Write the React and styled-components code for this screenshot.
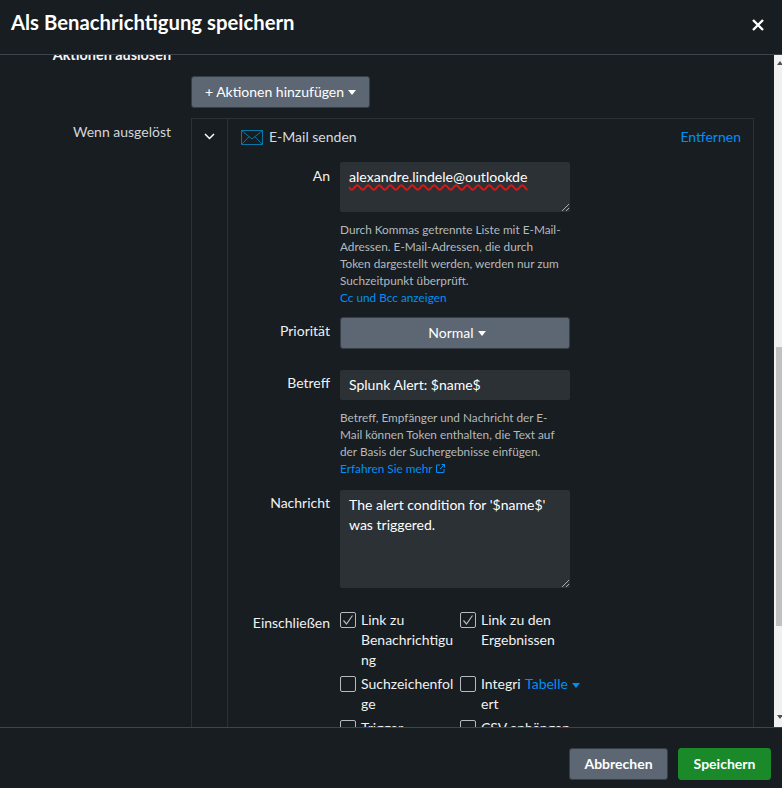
import styled, { createGlobalStyle } from "styled-components";

const GlobalStyle = createGlobalStyle`
  html, body {
    margin: 0;
    padding: 0;
    height: 100%;
    overflow: hidden;
    background: #171d21;
  }
  * { box-sizing: border-box; }
`;

const Modal = styled.div`
  width: 782px;
  height: 788px;
  display: flex;
  flex-direction: column;
  background: #171d21;
  color: #fff;
  font-family: Lato, "Open Sans", sans-serif;
  font-size: 14px;
`;

const Header = styled.header`
  height: 55px;
  flex: none;
  display: flex;
  align-items: center;
  justify-content: space-between;
  padding: 0 18px 10px 11px;
  border-bottom: 1px solid #3c444d;
`;

const Title = styled.h1`
  margin: 0;
  font-size: 20.3px;
  font-weight: 700;
`;

const Close = styled.svg`
  width: 12px;
  height: 12px;
  margin-top: 5px;
`;

const Middle = styled.div`
  flex: 1;
  min-height: 0;
  display: flex;
`;

const Scroller = styled.div`
  flex: 1;
  overflow: hidden;
`;

const Content = styled.div`
  margin-top: -10px;
  padding-left: 20px;
`;

const SectionTitle = styled.div`
  width: 151px;
  text-align: right;
  font-size: 14.4px;
  font-weight: 700;
  line-height: 20px;
  color: #f4f5f6;
`;

const Row = styled.div`
  display: flex;
  gap: 20px;
  margin-top: ${(p) => p.$top || 0}px;
`;

const SideLabel = styled.div`
  width: 151px;
  text-align: right;
  color: #d4d6d8;
  line-height: 20px;
  padding-top: 4px;
`;

const Button = styled.button`
  height: 32px;
  padding: 0 5px 2px;
  border: 1px solid #363d44;
  border-radius: 3px;
  background: #5c6773;
  color: #fff;
  font: inherit;
  display: flex;
  align-items: center;
  justify-content: center;
  gap: 4px;
`;

const AddButton = styled(Button)`
  width: 179px;
  margin-left: 171px;
  margin-top: 11px;
`;

const Caret = styled.span`
  display: inline-block;
  width: 0;
  height: 0;
  margin-top: 2px;
  border-left: 4px solid transparent;
  border-right: 4px solid transparent;
  border-top: 5px solid ${(p) => p.$color || "#fff"};
`;

const Panel = styled.div`
  width: 563px;
  display: flex;
  border: 1px solid #2b3135;
`;

const PanelToggle = styled.div`
  width: 36px;
  flex: none;
  border-right: 1px solid #2b3135;
  padding: 14px 0 0 12px;
`;

const Chevron = styled.svg`
  display: block;
  width: 11px;
  height: 7px;
`;

const PanelBody = styled.div`
  flex: 1;
  padding: 0 12px 0 13px;
`;

const PanelHead = styled.div`
  display: flex;
  align-items: center;
  height: 34px;
`;

const MailGlyph = styled.svg`
  display: block;
  width: 23px;
  height: 16px;
  margin-top: 3px;
`;

const MailName = styled.span`
  margin-left: 5px;
  color: #d8dadc;
`;

const Link = styled.a`
  color: #0090f5;
`;

const Remove = styled(Link)`
  margin-left: auto;
`;

const Field = styled.div`
  display: flex;
  gap: 10px;
  margin-top: ${(p) => p.$top || 0}px;
`;

const FieldLabel = styled.div`
  width: 89px;
  flex: none;
  text-align: right;
  line-height: 20px;
  padding-top: ${(p) => p.$top || 4}px;
  color: #f0f1f2;
`;

const FieldMain = styled.div`
  width: 230px;
  flex: none;
`;

const TextBox = styled.div`
  position: relative;
  height: ${(p) => p.$height}px;
  padding: 5px 9px;
  background: #2c3135;
  border-radius: 2px;
  line-height: 20px;
  color: #fff;
`;

const Misspelled = styled.span`
  font-size: 14.15px;
  text-decoration: underline wavy #e01414;
  text-decoration-thickness: 1.5px;
  text-underline-offset: 2px;
`;

const Grip = styled.svg`
  position: absolute;
  right: 0;
  bottom: 0;
  width: 9px;
  height: 9px;
`;

const Help = styled.div`
  margin-top: 9px;
  font-size: 11.8px;
  line-height: 17px;
  color: #b5b9bd;
`;

const HelpLink = styled(Link)`
  display: flex;
  align-items: center;
  gap: 3px;
`;

const WideButton = styled(Button)`
  width: 100%;
  padding-left: 9px;
`;

const Checks = styled.div`
  width: 242px;
  display: grid;
  grid-template-columns: 120px 120px;
  row-gap: 4px;
  height: 120px;
`;

const Check = styled.div`
  display: flex;
  gap: 5px;
  line-height: 20px;
  color: #f0f1f2;
`;

const Box = styled.span`
  width: 16px;
  height: 16px;
  flex: none;
  margin-top: 1px;
  border: 1px solid #b5b9bd;
  border-radius: 2px;
  display: flex;
  align-items: center;
  justify-content: center;
`;

const CheckText = styled.span`
  width: ${(p) => p.$width || 96}px;
  margin: -1px 0 1px;
  overflow-wrap: break-word;
`;

const TableLink = styled(Link)`
  display: flex;
  align-items: center;
  gap: 4px;
  height: 20px;
  margin: -1px 0 1px -1px;
`;

const Scrollbar = styled.div`
  width: 8px;
  flex: none;
  background: #f1f1f1;
  display: flex;
  flex-direction: column;
  align-items: center;
`;

const Thumb = styled.div`
  width: 6px;
  height: 279px;
  margin: 282px 0 0 2px;
  background: #c1c1c1;
`;

const Arrow = styled.span`
  width: 0;
  height: 0;
  border-left: 3px solid transparent;
  border-right: 3px solid transparent;
  border-${(p) => p.$side}: 4px solid #505050;
  margin-left: 4px;
  margin-top: ${(p) => p.$top}px;
`;

const Footer = styled.footer`
  height: 61px;
  flex: none;
  border-top: 1px solid #3c444d;
  display: flex;
  justify-content: flex-end;
  gap: 10px;
  padding: 20px 11px 0 0;
`;

const Cancel = styled(Button)`
  width: 99px;
  font-weight: 700;
`;

const Save = styled(Button)`
  width: 93px;
  font-weight: 700;
  background: #1a8929;
  border-color: #1a8929;
`;

const MailIcon = () => (
  <MailGlyph viewBox="0 0 23 16" fill="none" stroke="#0877a6" strokeWidth="1">
    <rect x="0.5" y="0.5" width="21" height="14" />
    <path d="M0.5 0.5 L11 9 L21.5 0.5 M0.5 14.5 L8 6.8 M21.5 14.5 L14 6.8" />
  </MailGlyph>
);

const Tick = () => (
  <svg width="12" height="12" viewBox="0 0 12 12" fill="none" stroke="#b5b9bd" strokeWidth="1.2">
    <path d="M1.5 6.5 L4.5 10 L10.5 1.5" />
  </svg>
);

const ResizeGrip = () => (
  <Grip viewBox="0 0 9 9" stroke="#a8acb0" strokeWidth="1">
    <path d="M1 8 L8 1 M5 8 L8 5" />
  </Grip>
);

export default function App() {
  return (
    <Modal>
      <GlobalStyle />
      <Header>
        <Title>Als Benachrichtigung speichern</Title>
        <Close viewBox="0 0 12 12" stroke="#fff" strokeWidth="2.4">
          <path d="M1 1 L11 11 M11 1 L1 11" />
        </Close>
      </Header>
      <Middle>
        <Scroller>
          <Content>
            <SectionTitle>Aktionen auslösen</SectionTitle>
            <AddButton>+ Aktionen hinzufügen <Caret /></AddButton>
            <Row $top={10}>
              <SideLabel>Wenn ausgelöst</SideLabel>
              <Panel>
                <PanelToggle>
                  <Chevron viewBox="0 0 11 7" fill="none" stroke="#fff" strokeWidth="1.5">
                    <path d="M1 1 L5.5 5.5 L10 1" />
                  </Chevron>
                </PanelToggle>
                <PanelBody>
                  <PanelHead>
                    <MailIcon />
                    <MailName>E-Mail senden</MailName>
                    <Remove>Entfernen</Remove>
                  </PanelHead>
                  <Field $top={9}>
                    <FieldLabel $top={4}>An</FieldLabel>
                    <FieldMain>
                      <TextBox $height={50}>
                        <Misspelled>alexandre.lindele@outlookde</Misspelled>
                        <ResizeGrip />
                      </TextBox>
                      <Help>
                        Durch Kommas getrennte Liste mit E-Mail-
                        <br />
                        Adressen. E-Mail-Adressen, die durch
                        <br />
                        Token dargestellt werden, werden nur zum
                        <br />
                        Suchzeitpunkt überprüft.
                        <br />
                        <Link>Cc und Bcc anzeigen</Link>
                      </Help>
                    </FieldMain>
                  </Field>
                  <Field $top={11}>
                    <FieldLabel $top={4}>Priorität</FieldLabel>
                    <FieldMain>
                      <WideButton>Normal <Caret /></WideButton>
                    </FieldMain>
                  </Field>
                  <Field $top={21}>
                    <FieldLabel $top={3}>Betreff</FieldLabel>
                    <FieldMain>
                      <TextBox $height={30}>Splunk Alert: $name$</TextBox>
                      <Help>
                        Betreff, Empfänger und Nachricht der E-
                        <br />
                        Mail können Token enthalten, die Text auf
                        <br />
                        der Basis der Suchergebnisse einfügen.
                        <HelpLink>
                          Erfahren Sie mehr
                          <svg width="9" height="9" viewBox="0 0 9 9" fill="none" stroke="#0090f5" strokeWidth="1">
                            <path d="M4 1 H0.5 V8.5 H8 V5 M4 5 L8.5 0.5 M5.5 0.5 H8.5 V3.5" />
                          </svg>
                        </HelpLink>
                      </Help>
                    </FieldMain>
                  </Field>
                  <Field $top={13}>
                    <FieldLabel $top={3}>Nachricht</FieldLabel>
                    <FieldMain>
                      <TextBox $height={98}>
                        The alert condition for '$name$' was triggered.
                        <ResizeGrip />
                      </TextBox>
                    </FieldMain>
                  </Field>
                  <Field $top={23}>
                    <FieldLabel $top={2}>Einschließen</FieldLabel>
                    <Checks>
                      <Check><Box><Tick /></Box><CheckText>Link zu Benachrichtigung</CheckText></Check>
                      <Check><Box><Tick /></Box><CheckText>Link zu den Ergebnissen</CheckText></Check>
                      <Check><Box /><CheckText>Suchzeichenfolge</CheckText></Check>
                      <Check>
                        <Box />
                        <CheckText $width={40}>Integriert</CheckText>
                        <TableLink>Tabelle <Caret $color="#0090f5" /></TableLink>
                      </Check>
                      <Check><Box /><CheckText>Trigger</CheckText></Check>
                      <Check><Box /><CheckText>CSV anhängen</CheckText></Check>
                    </Checks>
                  </Field>
                </PanelBody>
              </Panel>
            </Row>
          </Content>
        </Scroller>
        <Scrollbar>
          <Arrow $side="bottom" $top={6} />
          <Thumb />
          <Arrow $side="top" $top={89} />
        </Scrollbar>
      </Middle>
      <Footer>
        <Cancel>Abbrechen</Cancel>
        <Save>Speichern</Save>
      </Footer>
    </Modal>
  );
}
